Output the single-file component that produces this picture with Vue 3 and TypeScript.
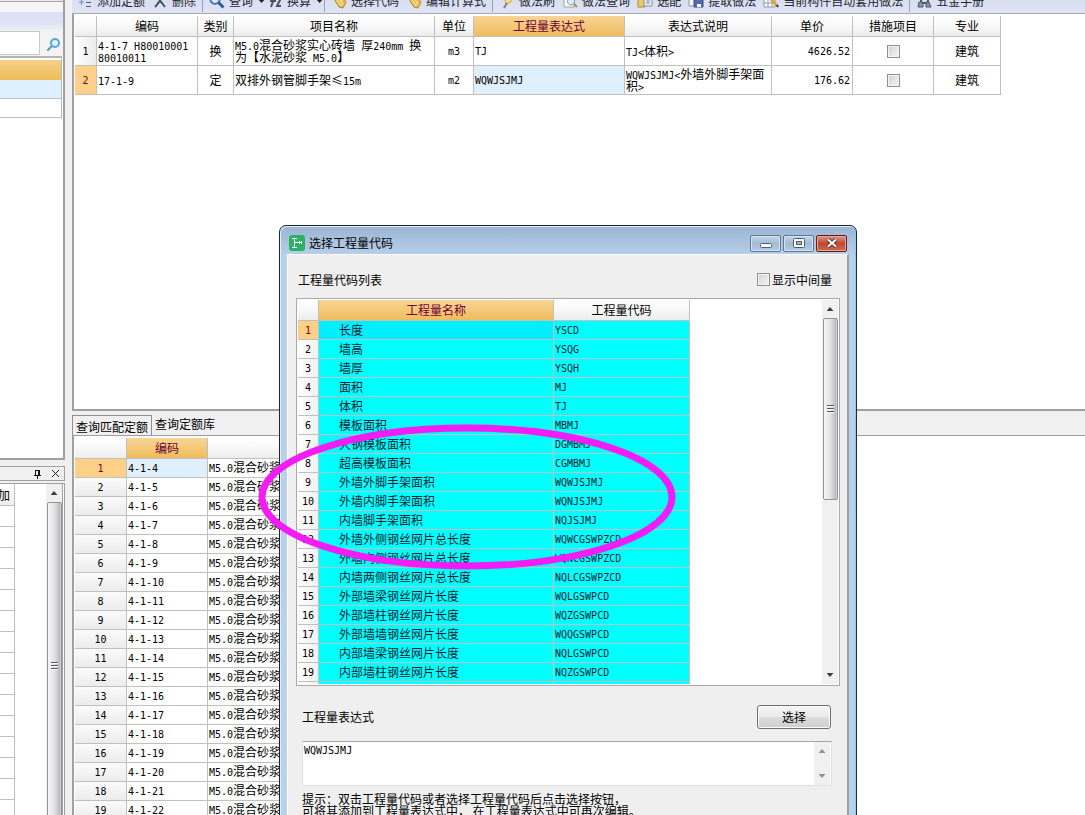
<script setup lang="ts">
import { h, ref, type FunctionalComponent } from 'vue'

interface Shape { d: string; fill?: string; stroke?: string; w?: number }
interface Tool { label: string; icon: Shape[]; menu?: boolean; sep?: boolean }
interface Quota { code: string; kind: string; name: string; unit: string; expr: string; desc: string; price: string; major: string }

// Latin runs are set in a half-width monospace face, Chinese runs in a full-width one.
const Mixed: FunctionalComponent<{ text: string }> = (props) =>
  (props.text.match(/[\x20-\x7e]+|[^\x20-\x7e]+/g) ?? []).map((run) =>
    /^[\x20-\x7e]/.test(run) ? h('span', { class: 'latin' }, run) : h('span', { class: 'han' }, run),
  )
Mixed.props = ['text']

const gold = '#d9a92f'
const tools: Tool[] = [
  { label: '添加定额', icon: [{ d: 'M2 9h5M4.500 6v6', stroke: '#6f8fc8' }, { d: 'M9 6h5M9 9.500h5M9 13.500h5', stroke: '#59606e' }] },
  { label: '删除', sep: true, icon: [{ d: 'M3 14C6 11 9 6 11 3M5 4c2 2 5 6 8 10', stroke: '#4c5465', w: 2 }] },
  { label: '查询', menu: true, icon: [{ d: 'M6 2a4.500 4.500 0 1 0 .1 0z', stroke: '#4e72b8', w: 2, fill: '#dbe9fb' }, { d: 'M9.500 9.500l5 5', stroke: '#35579c', w: 3 }] },
  { label: '换算', menu: true, sep: true, icon: [{ d: 'M4 14l4-11M3 8h6M10 5h4l-4 8h4', stroke: '#4a5160', w: 2 }] },
  { label: '选择代码', icon: [{ d: 'M3 6l8-3 4 6-3 6-4-1z', fill: '#e6bd55', stroke: '#b58620' }, { d: 'M6 7l4 6M9 6l3 6', stroke: '#fff3c8' }] },
  { label: '编辑计算式', sep: true, icon: [{ d: 'M3 6l8-3 4 6-3 6-4-1z', fill: '#e6bd55', stroke: '#b58620' }, { d: 'M6 7l4 6M9 6l3 6', stroke: '#fff3c8' }] },
  { label: '做法刷', icon: [{ d: 'M5 3h8l-1 6-5 2z', fill: '#f1dca0', stroke: gold }, { d: 'M8 10l-3 5', stroke: '#8a8478', w: 2 }] },
  { label: '做法查询', icon: [{ d: 'M2 1h10v13H2z', fill: '#fff', stroke: '#a5a08e' }, { d: 'M9 5a3.500 3.500 0 1 0 .1 0z', fill: '#d8ecfb', stroke: '#6f97bd' }, { d: 'M12 11l3 3', stroke: '#b58f43', w: 2 }] },
  { label: '选配', icon: [{ d: 'M1 3h6l1 2v9H1z', fill: '#efcb5b', stroke: '#b08b2c' }, { d: 'M7 2h8v11H7z', fill: '#eef3fb', stroke: '#7e8ba3' }, { d: 'M9 8h4M9 10h4', stroke: '#7e8ba3' }] },
  { label: '提取做法', icon: [{ d: 'M1 2h8v11H1z', fill: '#f7f9fd', stroke: '#8a94a8' }, { d: 'M6 6h9v8H6z', fill: '#5869a8', stroke: '#3c4b86' }, { d: 'M9 11h4v3H9z', fill: '#fff' }] },
  { label: '当前构件自动套用做法', sep: true, icon: [{ d: 'M1 2h11v12H1zM1 6h11M1 10h11M5 2v12M9 2v12', fill: '#fff', stroke: '#8b97a8' }, { d: 'M8 6l6 7', stroke: '#d6a83a', w: 3 }, { d: 'M14 12l1 2', stroke: '#30343c', w: 2 }] },
  { label: '五金手册', icon: [{ d: 'M3 9h4v5H2zM10 9h3l2 5h-5z', fill: '#8794a6', stroke: '#4f5969' }, { d: 'M5 9V4h7v5M6 10h5', stroke: '#4f5969', w: 2 }] },
]

const quotas: Quota[] = [
  { code: '4-1-7 H80010001\n80010011', kind: '换', name: 'M5.0混合砂浆实心砖墙 厚240mm 换\n为【水泥砂浆 M5.0】', unit: 'm3', expr: 'TJ', desc: 'TJ<体积>', price: '4626.52', major: '建筑' },
  { code: '17-1-9', kind: '定', name: '双排外钢管脚手架≤15m', unit: 'm2', expr: 'WQWJSJMJ', desc: 'WQWJSJMJ<外墙外脚手架面\n积>', price: '176.62', major: '建筑' },
]
const lines = (s: string) => s.split('\n')

const matches = Array.from({ length: 19 }, (_, i) => `4-1-${i + 4}`)

const quantities: [string, string][] = [
  ['长度', 'YSCD'], ['墙高', 'YSQG'], ['墙厚', 'YSQH'], ['面积', 'MJ'], ['体积', 'TJ'],
  ['模板面积', 'MBMJ'], ['大钢模板面积', 'DGMBMJ'], ['超高模板面积', 'CGMBMJ'],
  ['外墙外脚手架面积', 'WQWJSJMJ'], ['外墙内脚手架面积', 'WQNJSJMJ'], ['内墙脚手架面积', 'NQJSJMJ'],
  ['外墙外侧钢丝网片总长度', 'WQWCGSWPZCD'], ['外墙内侧钢丝网片总长度', 'WQNCGSWPZCD'],
  ['内墙两侧钢丝网片总长度', 'NQLCGSWPZCD'], ['外部墙梁钢丝网片长度', 'WQLGSWPCD'],
  ['外部墙柱钢丝网片长度', 'WQZGSWPCD'], ['外部墙墙钢丝网片长度', 'WQQGSWPCD'],
  ['内部墙梁钢丝网片长度', 'NQLGSWPCD'], ['内部墙柱钢丝网片长度', 'NQZGSWPCD'],
]

const showMiddle = ref(false)
const expression = ref('WQWJSJMJ')
const keyword = ref('')
</script>

<template>
  <div class="app">
    <aside class="side">
      <section class="panel finder">
        <div class="strip"></div>
        <div class="bar"></div>
        <div class="search">
          <input v-model="keyword" type="text" aria-label="搜索" />
          <button type="button" aria-label="搜索">
            <svg width="16" height="16" viewBox="0 0 16 16">
              <path d="M6 9l-4 4" stroke="#4a9ad6" stroke-width="2" stroke-linecap="round" />
              <circle cx="9" cy="6" r="4" fill="#e2f3fd" stroke="#55a8de" stroke-width="2" />
            </svg>
          </button>
        </div>
        <div class="list">
          <div class="list-head"></div>
          <div class="list-row picked"></div>
          <div class="list-row"></div>
        </div>
      </section>
      <section class="dock">
        <header class="dock-head">
          <button type="button" aria-label="固定">
            <svg width="9" height="10" viewBox="0 0 9 10"><path d="M2.500 1v5M6.500 1v5M2 1.500h5M1 6.500h7M4.500 7v3M5.500 1v5" stroke="#111" fill="none" /></svg>
          </button>
          <button type="button" aria-label="关闭">
            <svg width="9" height="9" viewBox="0 0 9 9"><path d="M1 1l7 7M8 1l-7 7" stroke="#222" fill="none" /></svg>
          </button>
        </header>
        <div class="dock-body">
          <div class="stub">
            <div class="stub-head">加</div>
            <div v-for="n in 16" :key="n" class="stub-row"></div>
          </div>
          <div class="scroll tall">
            <i class="up"></i>
            <div class="thumb"><i class="grip"></i></div>
          </div>
        </div>
      </section>
    </aside>

    <main class="work">
      <nav class="toolbar">
        <template v-for="t in tools" :key="t.label">
          <button type="button" class="tool">
            <svg width="16" height="16" viewBox="0 0 16 16">
              <path v-for="(s, i) in t.icon" :key="i" :d="s.d" :fill="s.fill ?? 'none'" :stroke="s.stroke ?? 'none'" :stroke-width="s.w ?? 1" />
            </svg>
            <span>{{ t.label }}</span>
            <i v-if="t.menu" class="caret"></i>
          </button>
          <i v-if="t.sep" class="sep"></i>
        </template>
      </nav>

      <section class="quota">
        <table class="grid quota-grid">
          <colgroup>
            <col class="w-no" /><col class="w-code" /><col class="w-kind" /><col class="w-name" /><col class="w-unit" /><col class="w-expr" />
            <col class="w-desc" /><col class="w-price" /><col class="w-price" /><col class="w-major" />
          </colgroup>
          <thead>
            <tr>
              <th></th><th>编码</th><th>类别</th><th>项目名称</th><th>单位</th><th class="hot">工程量表达式</th>
              <th>表达式说明</th><th>单价</th><th>措施项目</th><th>专业</th>
            </tr>
          </thead>
          <tbody>
            <tr v-for="(q, i) in quotas" :key="q.code">
              <td class="no" :class="{ on: i === 1 }"><Mixed :text="String(i + 1)" /></td>
              <td><div v-for="l in lines(q.code)" :key="l" class="line"><Mixed :text="l" /></div></td>
              <td class="mid">{{ q.kind }}</td>
              <td><div v-for="l in lines(q.name)" :key="l" class="line"><Mixed :text="l" /></div></td>
              <td class="mid"><Mixed :text="q.unit" /></td>
              <td :class="{ picked: i === 1 }"><Mixed :text="q.expr" /></td>
              <td><div v-for="l in lines(q.desc)" :key="l" class="line"><Mixed :text="l" /></div></td>
              <td class="num"><Mixed :text="q.price" /></td>
              <td class="mid"><input type="checkbox" class="tick" aria-label="措施项目" /></td>
              <td class="mid">{{ q.major }}</td>
            </tr>
          </tbody>
        </table>
      </section>

      <section class="lookup">
        <div class="tabs" role="tablist">
          <button type="button" role="tab" aria-selected="true" class="tab on">查询匹配定额</button>
          <button type="button" role="tab" aria-selected="false" class="tab">查询定额库</button>
        </div>
        <div class="lookup-body">
          <table class="grid match-grid">
            <colgroup><col class="w-mno" /><col class="w-mcode" /><col class="w-mname" /></colgroup>
            <thead><tr><th></th><th class="hot">编码</th><th></th></tr></thead>
            <tbody>
              <tr v-for="(m, i) in matches" :key="m">
                <td class="no" :class="{ on: i === 0 }"><Mixed :text="String(i + 1)" /></td>
                <td :class="{ picked: i === 0 }"><Mixed :text="m" /></td>
                <td><Mixed text="M5.0混合砂浆" /></td>
              </tr>
            </tbody>
          </table>
        </div>
      </section>
    </main>

    <div class="dialog" role="dialog" aria-labelledby="dialog-title">
      <header class="caption">
        <svg width="16" height="16" viewBox="0 0 16 16">
          <rect width="16" height="16" rx="3" fill="#2bb266" />
          <path d="M3 3.500h5M5.500 3.500v9M3 12.500h5M6 7.500h7M10.500 6v3M12.500 6v3" stroke="#fff" fill="none" />
        </svg>
        <span id="dialog-title">选择工程量代码</span>
        <div class="win-buttons">
          <button type="button" aria-label="最小化">
            <svg width="12" height="12" viewBox="0 0 12 12"><rect x="0.500" y="6.500" width="11" height="4" rx="1" fill="#fff" stroke="#4e5d70" /></svg>
          </button>
          <button type="button" aria-label="最大化">
            <svg width="12" height="12" viewBox="0 0 12 12"><rect x="0.500" y="1.500" width="11" height="9" rx="1" fill="#fff" stroke="#4e5d70" /><rect x="3.500" y="4.500" width="5" height="3" fill="#9bb5d2" stroke="#4e5d70" /></svg>
          </button>
          <button type="button" class="close" aria-label="关闭">
            <svg width="12" height="12" viewBox="0 0 12 12"><path d="M2 2.500l8 7M10 2.500l-8 7" stroke="#5c3434" stroke-width="4" /><path d="M2 2.500l8 7M10 2.500l-8 7" stroke="#fff" stroke-width="2" /></svg>
          </button>
        </div>
      </header>

      <div class="client">
        <div class="top-row">
          <span>工程量代码列表</span>
          <label><input v-model="showMiddle" type="checkbox" class="tick" />显示中间量</label>
        </div>

        <div class="codes">
          <div class="codes-view">
            <table class="grid code-grid">
              <colgroup><col class="w-cno" /><col class="w-cname" /><col class="w-ccode" /></colgroup>
              <thead><tr><th></th><th class="hot">工程量名称</th><th>工程量代码</th></tr></thead>
              <tbody>
                <tr v-for="(q, i) in quantities" :key="q[1]">
                  <td class="no" :class="{ on: i === 0 }"><Mixed :text="String(i + 1)" /></td>
                  <td class="indent" :class="{ current: i === 0 }">{{ q[0] }}</td>
                  <td><Mixed :text="q[1]" /></td>
                </tr>
                <tr class="partial"><td class="no"></td><td></td><td></td></tr>
              </tbody>
            </table>
          </div>
          <div class="scroll">
            <i class="up"></i>
            <div class="thumb"><i class="grip"></i></div>
            <i class="down"></i>
          </div>
        </div>

        <div class="expr-row">
          <label for="expression">工程量表达式</label>
          <button type="button" class="choose">选择</button>
        </div>
        <div class="expr-box">
          <textarea id="expression" v-model="expression"></textarea>
          <div class="scroll faint"><i class="up"></i><i class="down"></i></div>
        </div>
        <p class="hint">提示：双击工程量代码或者选择工程量代码后点击选择按钮，<br />可将其添加到工程量表达式中， 在工程量表达式中可再次编辑。</p>
      </div>
    </div>

    <svg class="marker" width="418" height="146" viewBox="0 0 418 146">
      <ellipse cx="209" cy="73" rx="205" ry="69" fill="none" stroke="#f41cf4" stroke-width="7" />
    </svg>
  </div>
</template>

<style>
html, body { height: 100%; overflow: hidden; }
.latin { font-family: "DejaVu Sans Mono", "Liberation Mono", monospace; font-size: 10px; white-space: pre; }
.han { font-family: "Noto Sans CJK SC", sans-serif; font-size: 12px; }
</style>

<style scoped>
.app {
  position: relative;
  display: flex;
  height: 100vh;
  overflow: hidden;
  background: #f0f0f0;
  color: #000;
  font: 12px/14px "Noto Sans CJK SC", sans-serif;
}
.app * { box-sizing: border-box; }
button, input, textarea { font: inherit; color: inherit; margin: 0; padding: 0; }
button { border: 0; background: none; }
i { display: block; flex: none; }

/* left column */
.side { flex: none; width: 65px; display: flex; flex-direction: column; }
.finder { height: 460px; border-right: 2px solid #a0a0a0; border-bottom: 2px solid #a0a0a0; background: #fff; }
.strip { height: 12px; background: linear-gradient(#e9e9e9 0 1px, #a6a6a6 1px 2px, #f5f5f5 2px); }
.bar { height: 18px; background: linear-gradient(#dcdff3, #dfe3f5 60%, #eceef8); }
.search { display: flex; height: 26px; background: #f0f0f0; }
.search input { flex: 1; min-width: 0; margin: 1px 0; border: 1px solid #c8c8c8; border-left: 0; background: #fff; }
.search button { width: 23px; height: 26px; padding: 5px 0 0 5px; background: #f3f3f3; }
.list { margin-right: 1px; border-top: 2px solid #b4b4b4; border-right: 1px solid #b8b8b8; padding-top: 2px; }
.list-head { height: 20px; background: linear-gradient(#f6d08a, #eebd5a); }
.list-row { height: 19px; border-bottom: 1px solid #c0c0c0; }
.picked { background: #e0effd; }
.dock { flex: 1; min-height: 0; margin-top: 6px; display: flex; flex-direction: column; }
.dock-head { display: flex; align-items: center; justify-content: flex-end; gap: 9px; height: 15px; padding-right: 4px; border: 1px solid #a0a0a0; border-left: 0; }
.dock-head button { display: flex; }
.dock-body { flex: 1; min-height: 0; display: flex; margin-top: 2px; overflow: hidden; border-top: 1px solid #a0a0a0; border-right: 3px double #a0a0a0; background: #fff; }
.stub { width: 15px; border-right: 1px solid #c0c0c0; }
.stub-head { height: 22px; padding-top: 4px; margin-left: -2px; border-bottom: 1px solid #c0c0c0; background: linear-gradient(#fff, #eee); }
.stub-row { height: 21px; border-bottom: 1px solid #c0c0c0; }

/* scroll bars */
.scroll { display: flex; flex-direction: column; align-items: center; flex: none; width: 16px; background: #f0f0f0; }
.scroll .up { width: 7px; height: 4px; margin: 7px 0 7px; background: #404040; clip-path: polygon(50% 0, 100% 100%, 0 100%); }
.scroll .down { width: 7px; height: 4px; margin: auto 0 7px; background: #404040; clip-path: polygon(0 0, 100% 0, 50% 100%); }
.thumb { display: flex; align-items: center; justify-content: center; width: 15px; height: 182px; border: 1px solid #959595; border-radius: 2px; background: linear-gradient(90deg, #f6f6f6, #e2e2e4 50%, #b9bbc0 90%, #d6d6d8); }
.grip { width: 7px; height: 8px; background: repeating-linear-gradient(#5a5a5a 0 1px, #fafafa 1px 2px, transparent 2px 3px); }
.tall { margin-left: auto; }
.tall .thumb { height: 328px; flex: none; }
.faint .up, .faint .down { background: #909090; }

/* toolbar */
.work { flex: 1; min-width: 0; display: flex; flex-direction: column; margin-left: 7px; }
.toolbar { display: flex; flex: none; align-items: flex-end; height: 14px; padding-left: 5px; overflow: hidden; border-bottom: 1px solid #a8a8b0; background: linear-gradient(#d9dff1, #dfe3f5); }
.tool { display: flex; flex: none; align-items: center; height: 16px; margin: 0 7px 4px 0; color: #23262e; white-space: nowrap; }
.tool svg { margin-right: 4px; }
.caret { width: 7px; height: 4px; margin: 0 -5px 0 5px; background: #222; clip-path: polygon(0 0, 100% 0, 50% 100%); }
.sep { width: 1px; height: 12px; margin: 0 6px 1px -1px; background: #9aa2b8; }

/* tables */
.grid { border-collapse: separate; border-spacing: 0; table-layout: fixed; }
.grid th, .grid td { height: 19px; padding: 0 0 0 1px; border-right: 1px solid #c0c0c0; border-bottom: 1px solid #c0c0c0; line-height: 12px; white-space: nowrap; overflow: hidden; text-align: left; font-weight: 400; }
.grid th { height: 21px; padding: 0; text-align: center; background: linear-gradient(#fff, #f8f8f8 50%, #ececec); }
.grid th.hot { color: #700038; background: linear-gradient(#f8d596, #efbc5c); }
.grid td.no { padding: 0; text-align: center; background: linear-gradient(90deg, #fff, #ececec); }
.grid td.no.on { color: #800020; background: #fdd087; }
.grid td.mid { padding: 0; text-align: center; }
.grid td.num { padding-right: 2px; text-align: right; }
.line { height: 12px; }
.tick { appearance: none; display: inline-block; width: 13px; height: 13px; border: 1px solid #8e8f8f; background: linear-gradient(135deg, #cfd0d2, #f6f6f6); box-shadow: inset 0 0 0 1px #f4f4f4; vertical-align: middle; }
.tick:checked { background: #3a6ea5; }

.quota { flex: none; height: 397px; padding: 2px 0 0 1px; border-left: 2px solid #a0a0a0; border-bottom: 2px solid #a0a0a0; background: #fff; }
.quota-grid { width: 926px; }
.quota-grid td { height: 29px; }
.w-no { width: 22px; }
.w-code { width: 101px; }
.w-kind { width: 36px; }
.w-name { width: 201px; }
.w-unit { width: 39px; }
.w-expr { width: 151px; }
.w-desc { width: 147px; }
.w-price { width: 81px; }
.w-major { width: 67px; }

.lookup { flex: 1; min-height: 0; display: flex; flex-direction: column; padding-top: 4px; }
.tabs { display: flex; flex: none; height: 21px; border-bottom: 1px solid #a0a0a0; }
.tab { height: 17px; padding: 0 3px; white-space: nowrap; }
.tab.on { height: 20px; padding-top: 3px; border: 1px solid #909090; border-bottom: 0; }
.lookup-body { flex: 1; min-height: 0; overflow: hidden; padding: 2px 0 0 1px; border-left: 2px solid #a0a0a0; background: #fff; }
.match-grid { width: 532px; }
.match-grid td.no { background: linear-gradient(#fbfbfb, #ececec); }
.w-mno { width: 52px; }
.w-mcode { width: 81px; }
.w-mname { width: 399px; }

/* dialog window */
.dialog { position: absolute; left: 279px; top: 225px; width: 578px; padding: 0 7px; border: 1px solid #1b2534; border-radius: 7px 7px 0 0; background: linear-gradient(#9ab4d3, #b9d0ea 30px, #b9d1ea); box-shadow: inset 1px 1px 0 #e4eefa, inset -1px 0 0 #7fd0ee; }
.caption { display: flex; align-items: center; height: 28px; padding: 6px 2px 0 2px; }
.caption span { margin-left: 4px; }
.win-buttons { display: flex; gap: 2px; margin-left: auto; }
.win-buttons button { display: flex; align-items: center; justify-content: center; width: 31px; height: 17px; border: 1px solid #5f7793; border-radius: 2px; background: linear-gradient(#c3d5ea, #a3bbd7 50%, #b5cbe5); box-shadow: inset 0 0 0 1px #d5e3f3; }
.win-buttons .close { border-color: #5b2020; background: linear-gradient(#dd9a8c, #c4452f 50%, #cf6a4e); box-shadow: inset 0 0 0 1px #e3a595; }
.client { padding: 0 7px 20px 8px; border: 1px solid #fff; border-right: 2px solid #9a9fa6; background: #efefef; }
.top-row { display: flex; align-items: center; justify-content: space-between; height: 43px; padding: 6px 8px 0 2px; }
.top-row label { display: flex; align-items: center; gap: 2px; }
.codes { display: flex; height: 388px; padding: 1px; border: 1px solid #a8a8a8; background: #fff; }
.codes-view { flex: 1; min-width: 0; overflow: hidden; }
.code-grid { width: 392px; }
.code-grid td { background: #0ff; color: #102030; }
.code-grid td.no { color: #000; background: linear-gradient(90deg, #fff, #f0f0f0); }
.code-grid td.no.on { color: #800020; background: #fdd087; }
.code-grid td.indent { padding-left: 20px; }
.code-grid td.current { background: #00eeff; }
.w-cno { width: 21px; }
.w-cname { width: 235px; }
.w-ccode { width: 136px; }
.expr-row { display: flex; align-items: center; justify-content: space-between; height: 55px; padding: 7px 9px 0 6px; }
.choose { width: 74px; height: 24px; border: 1px solid #707070; border-radius: 3px; background: linear-gradient(#f4f4f4, #ebebeb 50%, #dcdcdc 50%, #cfcfcf); box-shadow: inset 0 0 0 1px #fbfbfb; }
.expr-box { display: flex; height: 45px; margin: 0 8px 0 6px; padding-right: 1px; border: 1px solid #e0e0e0; border-top-color: #a4a4a4; background: #fff; }
.expr-box textarea { flex: 1; min-width: 0; padding: 2px 1px; border: 0; outline: 0; resize: none; overflow: hidden; background: transparent; font: 10px/14px "DejaVu Sans Mono", "Liberation Mono", monospace; }
.hint { margin: 7px 0 0 6px; line-height: 12px; white-space: nowrap; }

/* hand-drawn highlight over the dialog */
.marker { position: absolute; left: 258px; top: 424px; pointer-events: none; }
</style>
